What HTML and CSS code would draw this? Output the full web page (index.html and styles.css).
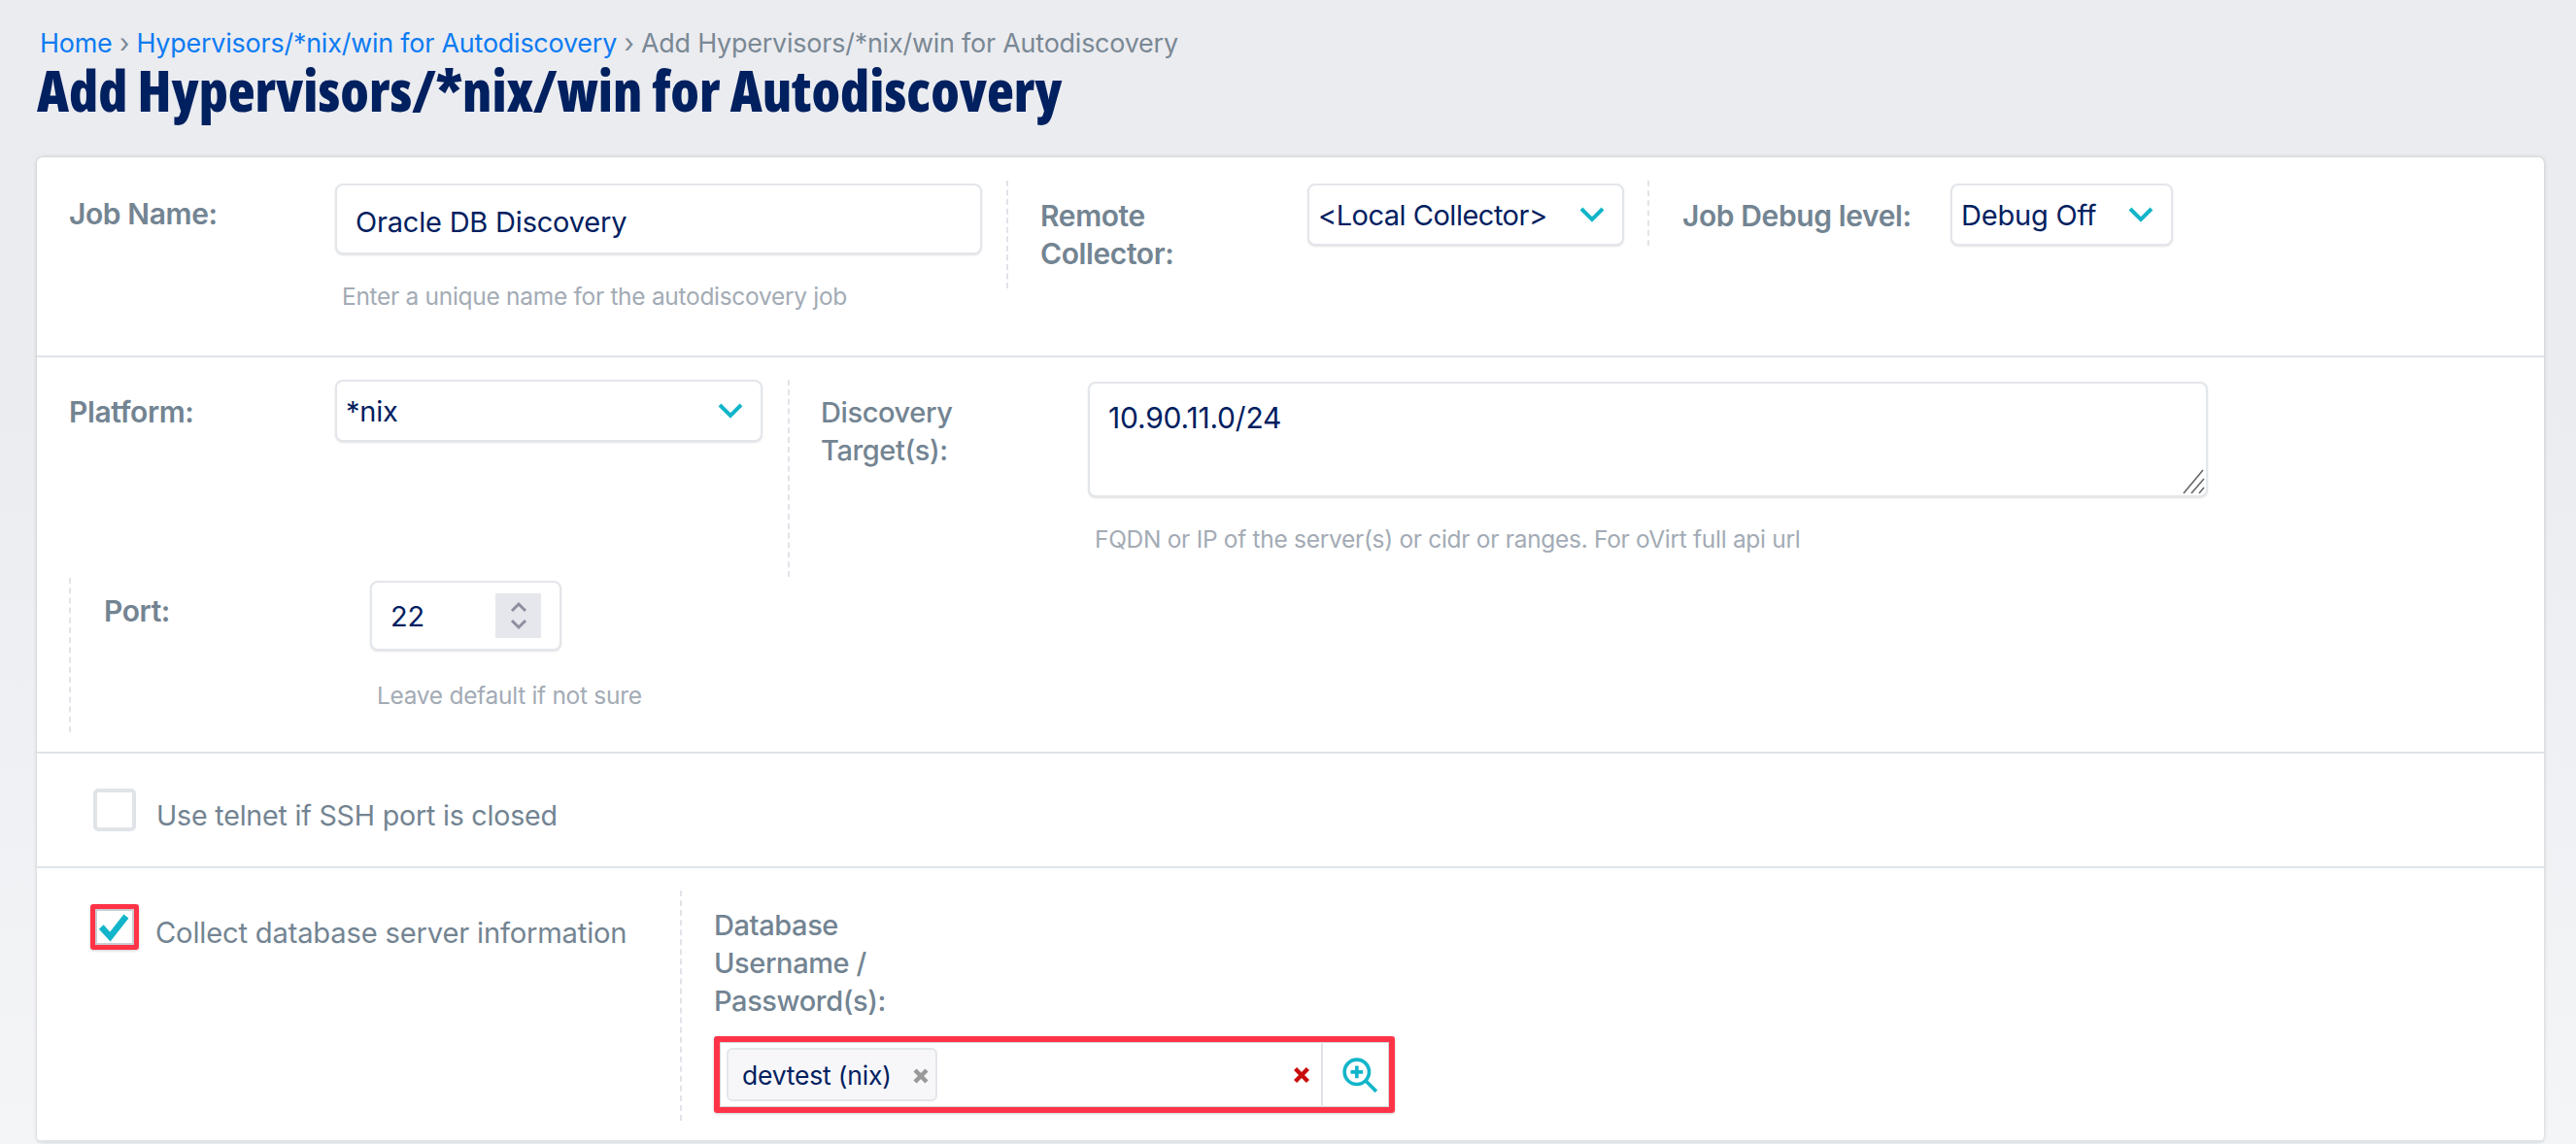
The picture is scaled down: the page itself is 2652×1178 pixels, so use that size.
FILE: index.html
```html
<!DOCTYPE html>
<html>
<head>
    <meta charset="utf-8">
    <title>Add Hypervisors/*nix/win for Autodiscovery</title>
    <link rel="stylesheet" href="styles.css">
</head>
<body>
    <div class="breadcrumb">
        <a href="#">Home</a> <span class="sep">›</span> <a href="#">Hypervisors/*nix/win for Autodiscovery</a> <span class="sep">›</span> Add Hypervisors/*nix/win for Autodiscovery
    </div>
    <h1>Add Hypervisors/*nix/win for Autodiscovery</h1>

    <div class="card">
        <!-- job -->
        <div class="row row-job">
            <div class="field field-name">
                <label class="lbl">Job Name:</label>
                <div>
                    <div class="box text-box name-box">Oracle DB Discovery</div>
                    <div class="help">Enter a unique name for the autodiscovery job</div>
                </div>
            </div>
            <div class="field dashed field-remote">
                <label class="lbl">Remote Collector:</label>
                <div class="box select collector-select">
                    <span>&lt;Local Collector&gt;</span>
                    <svg class="chev" viewBox="0 0 26 16"><path d="M2 2l11 11L24 2"/></svg>
                </div>
            </div>
            <div class="field dashed field-debug">
                <label class="lbl">Job Debug level:</label>
                <div class="box select debug-select">
                    <span>Debug Off</span>
                    <svg class="chev" viewBox="0 0 26 16"><path d="M2 2l11 11L24 2"/></svg>
                </div>
            </div>
        </div>

        <!-- platform -->
        <div class="row row-platform">
            <div class="platform-top">
                <div class="field field-platform">
                    <label class="lbl">Platform:</label>
                    <div class="box select platform-select">
                        <span>*nix</span>
                        <svg class="chev" viewBox="0 0 26 16"><path d="M2 2l11 11L24 2"/></svg>
                    </div>
                </div>
                <div class="field dashed field-target">
                    <label class="lbl">Discovery Target(s):</label>
                    <div>
                        <div class="target-wrap">
                            <textarea class="box target-box" spellcheck="false">10.90.11.0/24</textarea>
                            <svg class="grip" viewBox="0 0 24 26"><path d="M2 25L22 1M10 25L23 10M18 25l5-6"/></svg>
                        </div>
                        <div class="help">FQDN or IP of the server(s) or cidr or ranges. For oVirt full api url</div>
                    </div>
                </div>
            </div>
            <div class="field dashed field-port">
                <label class="lbl">Port:</label>
                <div>
                    <div class="box port-box">
                        <span>22</span>
                        <div class="spinner">
                            <svg viewBox="0 0 20 12"><path d="M3 10l7-7 7 7"/></svg>
                            <svg viewBox="0 0 20 12"><path d="M3 2l7 7 7-7"/></svg>
                        </div>
                    </div>
                    <div class="help">Leave default if not sure</div>
                </div>
            </div>
        </div>

        <!-- telnet -->
        <div class="row row-telnet">
            <span class="check"></span>
            <span class="check-text">Use telnet if SSH port is closed</span>
        </div>

        <!-- database -->
        <div class="row row-db">
            <div class="db-check">
                <span class="check checked">
                    <svg viewBox="0 0 36 36"><path d="M3 18l10 11L31 6"/></svg>
                </span>
                <span class="check-text">Collect database server information</span>
            </div>
            <div class="field dashed field-db">
                <label class="lbl db-lbl">Database Username / Password(s):</label>
                <div class="cred-box">
                    <div class="cred-tags">
                        <span class="tag">devtest (nix) <svg class="tag-x" viewBox="0 0 12 12"><path d="M2 2l8 8M10 2l-8 8"/></svg></span>
                    </div>
                    <svg class="clear-x" viewBox="0 0 14 14"><path d="M2 2l10 10M12 2L2 12"/></svg>
                    <div class="cred-lookup">
                        <svg viewBox="0 0 36 36"><circle cx="15" cy="15" r="12"/><path d="M24 24l10 10M15 9v12M9 15h12"/></svg>
                    </div>
                </div>
            </div>
        </div>
    </div>
</body>
</html>
```

FILE: styles.css
```css
html, body {
    margin: 0;
    height: 1178px;
    overflow: hidden;
}
body {
    font-family: "Inter", "Open Sans", sans-serif;
    background: linear-gradient(#ebecf0, #ebecf0 400px, #f4f5f7);
    padding: 27px 33px 0 38px;
    box-sizing: border-box;
}
.breadcrumb {
    font-size: 26.9px;
    line-height: 34px;
    letter-spacing: -0.2px;
    color: #7a8894;
    padding-left: 3px;
}
.breadcrumb a {
    color: #0d7bf2;
    text-decoration: none;
}
h1 {
    margin: 0 0 37px;
    font-family: "Open Sans", sans-serif;
    font-stretch: 75%;
    font-weight: 800;
    font-size: 57.5px;
    line-height: 64px;
    color: #00205f;
}
.card {
    background: #fff;
    border-radius: 6px;
    box-shadow: 0 0 4px rgba(0,0,0,0.18);
}
.row {
    border-bottom: 2px solid #e0e4e9;
    box-sizing: border-box;
}
.row-job {
    display: flex;
    align-items: flex-start;
    height: 206px;
    padding-top: 24px;
}
.row-platform {
    height: 408px;
    padding-top: 23px;
}
.platform-top {
    display: flex;
    align-items: flex-start;
}
.row-telnet {
    display: flex;
    align-items: center;
    height: 118px;
    padding-left: 58px;
}
.row-db {
    display: flex;
    align-items: flex-start;
    height: 282px;
    padding-top: 23px;
}
.field {
    display: flex;
    align-items: flex-start;
}
.dashed {
    border-left: 2px dashed #e0e4e9;
}
.lbl {
    display: block;
    flex: none;
    box-sizing: border-box;
    font-size: 30px;
    font-weight: 600;
    letter-spacing: -0.4px;
    line-height: 39px;
    color: #738492;
    margin-top: 15px;
}
.box {
    display: block;
    box-sizing: border-box;
    background: #fff;
    border: 2px solid #e3e6ea;
    border-radius: 8px;
    box-shadow: 0 1px 2px rgba(0,0,0,0.12);
    color: #00205f;
    font-family: inherit;
    font-size: 29px;
    letter-spacing: -0.2px;
}
.help {
    font-size: 24.5px;
    line-height: 30px;
    letter-spacing: -0.3px;
    color: #a3abb5;
    margin: 28px 0 0 7px;
}
.text-box {
    height: 73px;
    line-height: 69px;
    padding: 3px 0 0 19px;
}
.select {
    display: flex;
    align-items: center;
    justify-content: space-between;
    height: 64px;
    padding: 0 18px 0 9px;
}
.chev {
    width: 26px;
    height: 16px;
    flex: none;
}
.chev path {
    fill: none;
    stroke: #12b5c9;
    stroke-width: 4;
}

/* first row */
.field-name {
    padding: 3px 0 0 33px;
    margin-right: 25px;
}
.field-name .lbl {
    width: 274px;
    margin-top: 12px;
}
.name-box {
    width: 666px;
}
.field-remote {
    padding: 3px 0 16px 33px;
    margin-right: 24px;
}
.field-remote .lbl {
    width: 275px;
    padding-right: 110px;
    margin-top: 14px;
}
.collector-select {
    width: 326px;
    letter-spacing: -0.5px;
}
.field-debug {
    padding: 3px 0 0 34px;
}
.field-debug .lbl {
    width: 276px;
    margin-top: 14px;
}
.debug-select {
    width: 229px;
}

/* platform row */
.field-platform {
    padding-left: 33px;
    margin-right: 26px;
}
.field-platform .lbl {
    width: 274px;
    margin-top: 14px;
}
.platform-select {
    width: 440px;
}
.field-target {
    padding: 2px 0 24px 32px;
}
.field-target .lbl {
    width: 275px;
    padding-right: 90px;
    margin-top: 12px;
    font-size: 29px;
    font-weight: 500;
}
.target-wrap {
    position: relative;
}
.target-box {
    width: 1153px;
    height: 119px;
    padding: 17px 19px;
    font-size: 30px;
    line-height: 36px;
    outline: none;
    resize: none;
}
.grip {
    position: absolute;
    right: 3px;
    bottom: 3px;
    width: 24px;
    height: 26px;
}
.grip path {
    fill: none;
    stroke: #666;
    stroke-width: 1.6;
}
.field-port {
    margin: 1px 0 0 33px;
    padding: 3px 0 23px 34px;
    width: 600px;
}
.field-port .lbl {
    width: 274px;
    margin-top: 12px;
}
.port-box {
    display: flex;
    align-items: center;
    justify-content: space-between;
    width: 197px;
    height: 72px;
    padding: 0 19px;
}
.field-port .help {
    margin-top: 31px;
}
.spinner {
    width: 47px;
    height: 46px;
    background: #e6e7ec;
    display: flex;
    flex-direction: column;
    align-items: center;
    justify-content: center;
    gap: 6px;
}
.spinner svg {
    width: 20px;
    height: 12px;
}
.spinner path {
    fill: none;
    stroke: #8e8e9f;
    stroke-width: 3;
}

/* checkboxes */
.check {
    display: block;
    box-sizing: border-box;
    flex: none;
    width: 44px;
    height: 44px;
    border: 4px solid #e0e4e9;
    border-radius: 5px;
}
.check-text {
    font-size: 28.6px;
    letter-spacing: -0.2px;
    color: #738492;
    margin-left: 21px;
    margin-top: 10px;
}
.db-check {
    display: flex;
    align-items: flex-start;
    width: 662px;
    padding: 14px 0 0 55px;
    box-sizing: border-box;
}
.db-check .check-text {
    font-size: 29.2px;
    margin-left: 17px;
    margin-top: 13px;
    line-height: 34px;
}
.check.checked {
    width: 50px;
    height: 47px;
    border: 5px solid #ff3347;
    border-radius: 3px;
    box-shadow: inset 0 0 0 2px #c9ced3, 0 1px 3px rgba(0,0,0,0.2);
    padding: 2px;
}
.checked svg {
    display: block;
    width: 100%;
    height: 100%;
}
.checked path {
    fill: none;
    stroke: #12b5c9;
    stroke-width: 7;
}

/* database credentials */
.field-db {
    display: block;
    height: 237px;
    padding: 16px 0 0 33px;
    box-sizing: border-box;
}
.db-lbl {
    width: 170px;
    margin: 0 0 17px;
    font-size: 29px;
    font-weight: 500;
}
.cred-box {
    display: flex;
    align-items: center;
    box-sizing: border-box;
    width: 701px;
    height: 79px;
    border: 6px solid #ff3347;
    border-radius: 3px;
    box-shadow: inset 0 0 0 1px #d4d8dc, 0 1px 3px rgba(0,0,0,0.2);
}
.cred-tags {
    flex: 1;
    padding-left: 7px;
}
.tag {
    display: inline-flex;
    align-items: center;
    box-sizing: border-box;
    height: 55px;
    width: 217px;
    padding-left: 14px;
    gap: 21px;
    background: #f7f7f9;
    border: 2px solid #e3e6ea;
    border-radius: 6px;
    color: #00205f;
    font-size: 26.5px;
    letter-spacing: -0.2px;
}
.tag-x {
    width: 18px;
    height: 18px;
    flex: none;
    margin-top: 3px;
}
.tag-x path {
    fill: none;
    stroke: #999;
    stroke-width: 3;
}
.clear-x {
    width: 18px;
    height: 18px;
    flex: none;
    margin-right: 11px;
}
.clear-x path {
    fill: none;
    stroke: #c80b0b;
    stroke-width: 3.4;
}
.cred-lookup {
    flex: none;
    align-self: stretch;
    width: 70px;
    display: flex;
    align-items: center;
    justify-content: center;
    padding-left: 8px;
    border-left: 2px solid #dfe3e8;
    box-sizing: border-box;
}
.cred-lookup svg {
    width: 38px;
    height: 38px;
}
.cred-lookup circle, .cred-lookup path {
    fill: none;
    stroke: #12b5c9;
    stroke-width: 3.4;
}
```
